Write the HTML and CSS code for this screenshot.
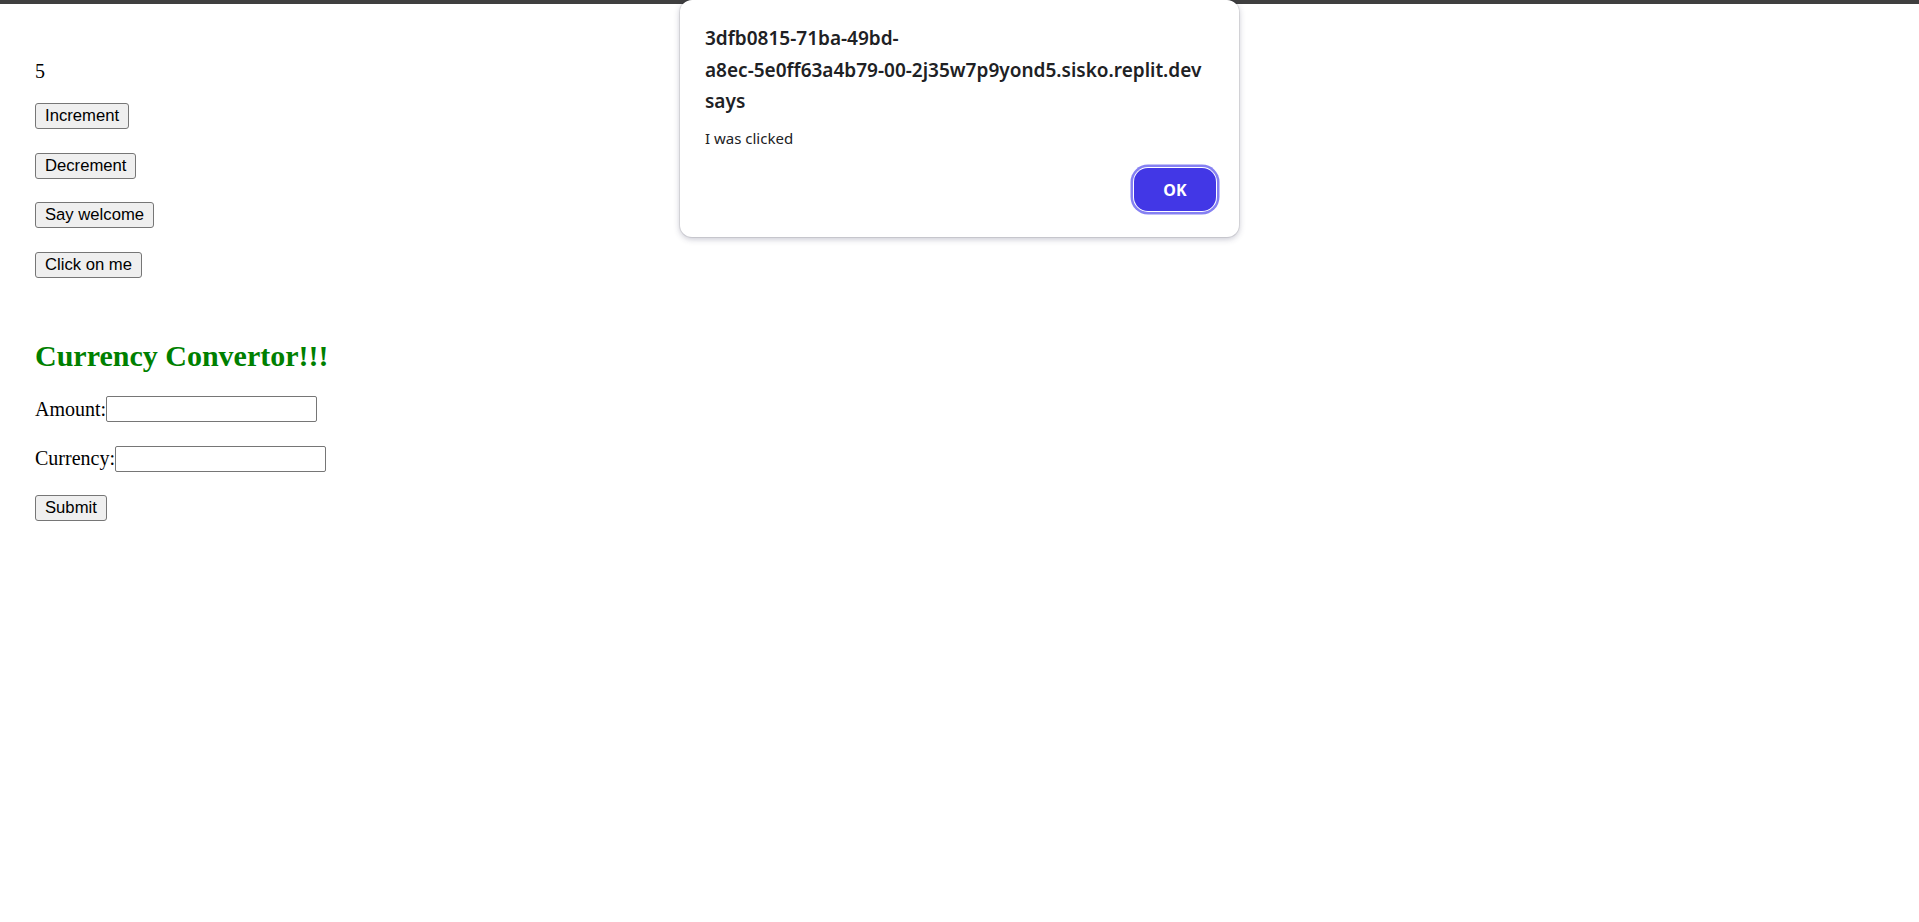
FILE: index.html
```html
<!DOCTYPE html>
<html lang="en">
<head>
<meta charset="utf-8">
<title>App</title>
<link rel="stylesheet" href="styles.css">
</head>
<body>
<div class="topbar"></div>
<main class="page">
  <p class="count">5</p>
  <div class="btn-row"><button class="btn">Increment</button></div>
  <div class="btn-row"><button class="btn">Decrement</button></div>
  <div class="btn-row"><button class="btn">Say welcome</button></div>
  <div class="btn-row"><button class="btn">Click on me</button></div>
  <h2 class="title">Currency Convertor!!!</h2>
  <form class="form">
    <div class="field first"><label class="label">Amount:</label><input class="input" type="text"></div>
    <div class="field"><label class="label">Currency:</label><input class="input" type="text"></div>
    <div class="field"><button class="btn" type="button">Submit</button></div>
  </form>
</main>
<div class="dialog">
  <div class="dialog-title">3dfb0815-71ba-49bd-<br>a8ec-5e0ff63a4b79-00-2j35w7p9yond5.sisko.replit.dev<br>says</div>
  <div class="dialog-msg">I was clicked</div>
  <div class="dialog-footer"><button class="ok">OK</button></div>
</div>
</body>
</html>
```
FILE: styles.css
```css
html, body {
  margin: 0;
  padding: 0;
  background: #ffffff;
}
body {
  font-family: "Liberation Serif", "Times New Roman", serif;
  font-size: 20px;
  color: #000;
}
.topbar {
  height: 4px;
  background: #3f3f3f;
}
.page {
  display: flex;
  flex-direction: column;
  align-items: flex-start;
  padding: 56px 35px 0;
}
.count {
  margin: 0;
  line-height: 23px;
  height: 23px;
}
.btn-row {
  margin-top: 20px;
  height: 26px;
  display: flex;
}
.btn-row + .btn-row {
  margin-top: 23.5px;
}
.btn {
  height: 26px;
  box-sizing: border-box;
  padding: 0 9px;
  border: 1px solid #767676;
  border-radius: 3px;
  background: #efefef;
  color: #000;
  font-family: "Liberation Sans", Arial, sans-serif;
  font-size: 16.67px;
  line-height: 24px;
}
.title {
  margin: 61.5px 0 0;
  font-size: 30px;
  line-height: 34px;
  font-weight: bold;
  color: #008000;
}
.form {
  margin: 0;
  display: flex;
  flex-direction: column;
  align-items: flex-start;
}
.field {
  display: flex;
  align-items: center;
  height: 26px;
  margin-top: 23.5px;
}
.field.first {
  margin-top: 23px;
}
.label {
  line-height: 23px;
}
.input {
  width: 211px;
  height: 26px;
  box-sizing: border-box;
  margin: 0;
  border: 1px solid #767676;
  border-radius: 2px;
  padding: 1px 2px;
  font-family: "Liberation Sans", Arial, sans-serif;
  font-size: 16.67px;
}
.dialog {
  position: absolute;
  left: 680px;
  top: 0;
  width: 559px;
  height: 237px;
  box-sizing: border-box;
  padding: 23px 23px 26px 25px;
  background: #fff;
  border-radius: 12px;
  box-shadow: 0 0 0 1px rgba(0,0,0,0.08), 0 2px 6px rgba(40,40,80,0.28);
  display: flex;
  flex-direction: column;
  font-family: "Noto Sans", "Open Sans", sans-serif;
  color: #202124;
}
.dialog-title {
  font-size: 19px;
  font-weight: 600;
  line-height: 31.5px;
  white-space: nowrap;
}
.dialog-msg {
  margin-top: 10px;
  font-size: 15px;
  line-height: 20px;
}
.dialog-footer {
  margin-top: auto;
  display: flex;
  justify-content: flex-end;
}
.ok {
  width: 82px;
  height: 43px;
  border: none;
  border-radius: 14px;
  background: #4237e6;
  color: #fff;
  font-family: "Noto Sans", "Open Sans", sans-serif;
  font-weight: 700;
  font-size: 16px;
  box-shadow: 0 0 0 1px #fff, 0 0 0 3.5px #8580f2;
}
```
